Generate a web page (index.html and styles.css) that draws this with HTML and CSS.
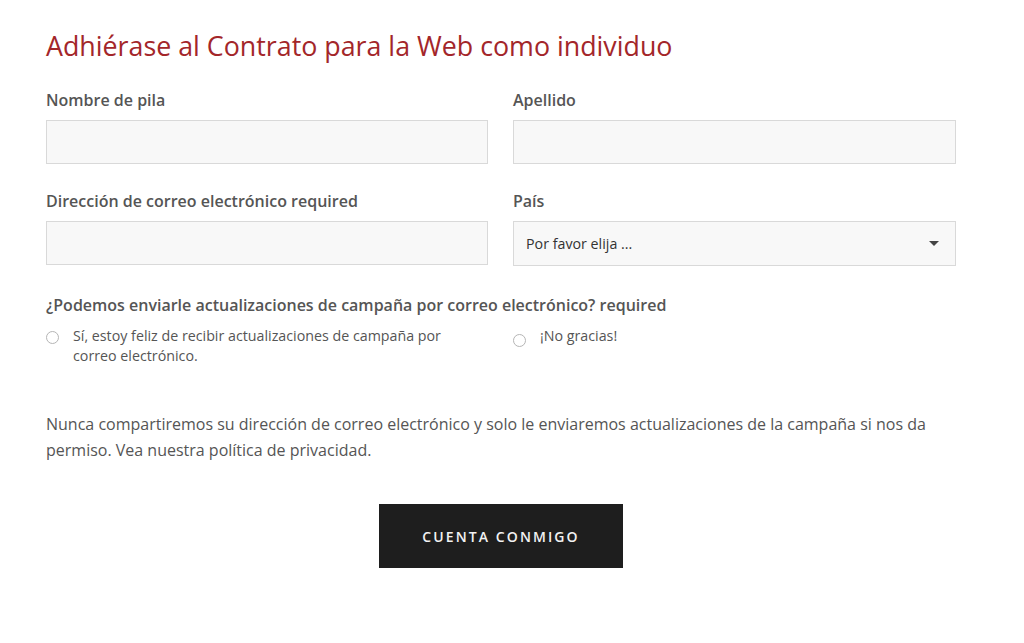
FILE: index.html
```html
<!DOCTYPE html>
<html lang="es">
<head>
<meta charset="utf-8">
<title>Contrato para la Web</title>
<link rel="stylesheet" href="styles.css">
</head>
<body>
<main class="form-wrap">
  <h1 class="title">Adhiérase al Contrato para la Web como individuo</h1>
  <form class="form">
    <div class="grid">
      <div class="field">
        <label class="label">Nombre de pila</label>
        <div class="input"></div>
      </div>
      <div class="field">
        <label class="label">Apellido</label>
        <div class="input"></div>
      </div>
      <div class="field">
        <label class="label">Dirección de correo electrónico required</label>
        <div class="input"></div>
      </div>
      <div class="field">
        <label class="label">País</label>
        <div class="input select">
          <span class="select-text">Por favor elija ...</span>
          <svg class="caret" width="10" height="5" viewBox="0 0 10 5"><path d="M0 0 L10 0 L5 5 Z" fill="#444"/></svg>
        </div>
      </div>
    </div>
    <div class="question">¿Podemos enviarle actualizaciones de campaña por correo electrónico? required</div>
    <div class="radios">
      <div class="radio-opt">
        <span class="radio"></span>
        <span class="radio-text">Sí, estoy feliz de recibir actualizaciones de campaña por correo electrónico.</span>
      </div>
      <div class="radio-opt no">
        <span class="radio"></span>
        <span class="radio-text">¡No gracias!</span>
      </div>
    </div>
    <p class="note">Nunca compartiremos su dirección de correo electrónico y solo le enviaremos actualizaciones de la campaña si nos da permiso. Vea nuestra política de privacidad.</p>
    <div class="actions">
      <button type="button" class="btn">CUENTA CONMIGO</button>
    </div>
  </form>
</main>
</body>
</html>
```

FILE: styles.css
```css
* { box-sizing: border-box; }
html, body { margin: 0; padding: 0; background: #fff; }
body {
  font-family: "Open Sans", "Noto Sans", sans-serif;
  color: #555;
}
.form-wrap {
  width: 910px;
  margin-left: 46px;
  padding-top: 28px;
}
.title {
  margin: 0;
  font-size: 26.8px;
  line-height: 36px;
  font-weight: 400;
  color: #a3262a;
}
.form { margin-top: 25px; }
.grid {
  display: grid;
  grid-template-columns: 442px 443px;
  column-gap: 25px;
  row-gap: 26px;
}
.field { display: flex; flex-direction: column; }
.label {
  font-size: 16px;
  line-height: 22px;
  font-weight: 600;
  color: #555;
  margin-bottom: 9px;
}
.input {
  height: 44px;
  background: #f8f8f8;
  border: 1px solid #d9d9d9;
}
.select {
  display: flex;
  align-items: center;
  justify-content: space-between;
  padding: 0 16px 0 12px;
  height: 45px;
}
.select-text { font-size: 14.25px; color: #333; }
.caret { display: block; }
.question {
  margin-top: 28px;
  font-size: 16px;
  line-height: 22px;
  font-weight: 600;
  color: #555;
}
.radios {
  display: grid;
  grid-template-columns: 442px 443px;
  column-gap: 25px;
  margin-top: 10px;
}
.radio-opt {
  display: flex;
  align-items: flex-start;
  font-size: 14.25px;
  line-height: 20px;
  color: #555;
}
.radio-opt .radio-text { max-width: 385px; }
.radio {
  flex: none;
  width: 13px;
  height: 13px;
  border: 1px solid #b5b5b5;
  border-radius: 50%;
  margin-top: 5px;
  margin-right: 14px;
  background: #fff;
}
.radio-opt.no { padding-top: 2px; }
.radio-opt.no .radio { margin-top: 6px; }
.radio-opt.no .radio-text { margin-top: -2px; }
.note {
  margin: 45px 0 0;
  font-size: 16px;
  line-height: 26px;
  color: #555;
}
.actions {
  display: flex;
  justify-content: center;
  margin-top: 41px;
}
.btn {
  width: 244px;
  height: 64px;
  background: #1e1e1e;
  color: #f2f2f2;
  border: none;
  font-family: "Open Sans", "Noto Sans", sans-serif;
  font-size: 14px;
  font-weight: 600;
  letter-spacing: 2.1px;
  cursor: pointer;
  padding: 0;
}
```
